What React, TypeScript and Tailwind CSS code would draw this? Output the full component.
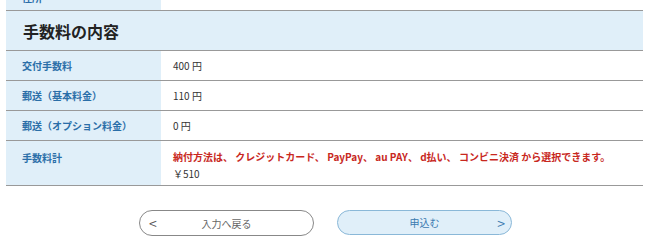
import React from 'react';

const FONT = { fontFamily: '"Noto Sans CJK JP", "Noto Sans", sans-serif' };

const rows: { label: string; value: React.ReactNode; tall?: boolean }[] = [
  { label: '交付手数料', value: '400 円' },
  { label: '郵送（基本料金）', value: '110 円' },
  { label: '郵送（オプション料金）', value: '0 円' },
  {
    label: '手数料計',
    tall: true,
    value: (
      <div className="flex flex-col gap-[2px]">
        <span className="font-bold text-[#c8281e]">
          納付方法は、 クレジットカード、 PayPay、 au PAY、 d払い、 コンビニ決済 から選択できます。
        </span>
        <span>￥510</span>
      </div>
    ),
  },
];

export default function App() {
  return (
    <div className="w-[650px] h-[244px] bg-white overflow-hidden" style={FONT}>
      <div className="ml-[6px] w-[637px]">
        <div className="flex h-[11px] overflow-hidden border-b border-[#999]">
          <div className="w-[155px] bg-[#e0eff9] pl-4 text-[10px] font-bold text-[#2a6ea8] leading-none">
            <span className="block -mt-[7px]">住所</span>
          </div>
          <div className="flex-1" />
        </div>
        <div className="h-[40px] flex items-center bg-[#e0eff9] border-b border-[#999] pl-[17px]">
          <h2 className="text-[16px] font-bold text-[#222] leading-none">手数料の内容</h2>
        </div>
        {rows.map(r => (
          <div key={r.label} className={`flex border-b border-[#999] ${r.tall ? 'h-[45px]' : 'h-[30px]'}`}>
            <div className={`w-[155px] bg-[#e0eff9] pl-4 text-[10px] font-bold text-[#2a6ea8] flex ${r.tall ? 'items-start pt-[9px]' : 'items-center'}`}>
              {r.label}
            </div>
            <div className={`flex-1 pl-3 text-[10px] text-[#333] flex ${r.tall ? 'items-start pt-[8px]' : 'items-center'}`}>
              {r.value}
            </div>
          </div>
        ))}
      </div>
      <div className="flex justify-center gap-[23px] mt-[24px] pl-[1px]">
        <button className="relative w-[175px] h-[26px] rounded-full border border-[#888] bg-white text-[10px] text-[#666] flex items-center justify-center">
          <span className="absolute left-[9px] text-[14px] leading-none text-[#555]">&lt;</span>
          入力へ戻る
        </button>
        <button className="relative w-[175px] h-[25px] rounded-full border border-[#8ab8d8] bg-[#e0eff9] text-[10px] text-[#3a7ab0] flex items-center justify-center">
          申込む
          <span className="absolute right-[6px] text-[14px] leading-none text-[#3a7ab0]">&gt;</span>
        </button>
      </div>
    </div>
  );
}
